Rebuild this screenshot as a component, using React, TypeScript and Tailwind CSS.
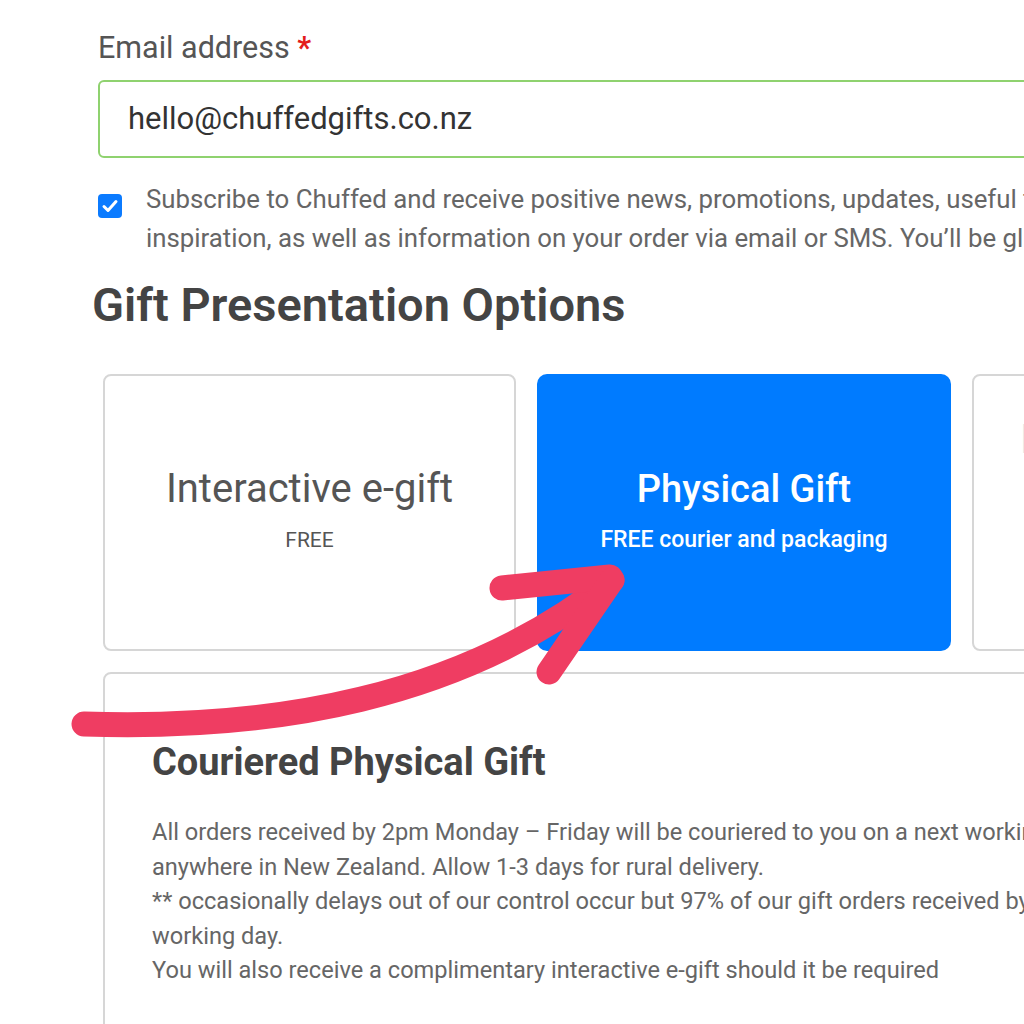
import React from 'react';

const font = { fontFamily: 'Roboto, "Noto Sans", sans-serif' };

function CheckMark() {
  return (
    <svg viewBox="0 0 24 24" className="h-[24px] w-[24px]">
      <rect x="0" y="0" width="24" height="24" rx="4" fill="#0b7bff" />
      <path d="M6 12.5l4 4 8-9" fill="none" stroke="#fff" strokeWidth="3" strokeLinecap="round" strokeLinejoin="round" />
    </svg>
  );
}

function Arrow() {
  return (
    <svg className="pointer-events-none absolute left-0 top-0" width="1024" height="1024" viewBox="0 0 1024 1024">
      <g fill="none" stroke="#ef3d62" strokeWidth="25" strokeLinecap="round" strokeLinejoin="round">
        <path d="M84 724 C 270 730, 460 700, 612 580" />
        <path d="M502 588 L 610 577" />
        <path d="M612 580 L 549 672" />
      </g>
    </svg>
  );
}

export default function App() {
  return (
    <div className="relative h-[1024px] w-[1024px] overflow-hidden bg-white" style={font}>
      <div className="w-[1400px] pl-[98px] pt-[28px]">
        <label className="block text-[30.5px] leading-[40px] text-[#555]">
          Email address <span className="font-bold text-[#e31b1b]">*</span>
        </label>
        <div className="mt-[12px] flex h-[78px] w-[1200px] items-center rounded-[6px] border-2 border-[#8fd26f] pl-[28px] text-[31px] text-[#333]">
          hello@chuffedgifts.co.nz
        </div>
        <div className="mt-[22px] flex gap-[24px]">
          <div className="pt-[14px]">
            <CheckMark />
          </div>
          <div className="whitespace-nowrap text-[25.8px] leading-[39px] text-[#666]">
            <div>Subscribe to Chuffed and receive positive news, promotions, updates, useful tips and gift</div>
            <div>inspiration, as well as information on your order via email or SMS. You’ll be glad you did.</div>
          </div>
        </div>
        <h2 className="ml-[-6px] mt-[19px] text-[47px] font-semibold leading-[56px] text-[#444]">Gift Presentation Options</h2>
        <div className="ml-[5px] mt-[41px] flex gap-[21px]">
          <div className="flex h-[277px] w-[413px] flex-col items-center justify-center rounded-[8px] border-2 border-[#d6d6d6] pb-[5px]">
            <div className="text-[40px] leading-[48px] text-[#555]">Interactive e-gift</div>
            <div className="mt-[12px] text-[21px] leading-[30px] text-[#555]">FREE</div>
          </div>
          <div className="flex h-[277px] w-[414px] flex-col items-center justify-center rounded-[10px] bg-[#007bff] pb-[5px] text-white">
            <div className="text-[38px] font-medium leading-[48px]">Physical Gift</div>
            <div className="mt-[12px] text-[23px] font-medium leading-[30px]">FREE courier and packaging</div>
          </div>
          <div className="h-[277px] w-[413px] rounded-[8px] border-2 border-[#d6d6d6] pl-[46px] pt-[40px]">
            <div className="text-[40px] leading-[48px] text-[#e4e4e4]">Ready</div>
          </div>
        </div>
        <div className="ml-[5px] mt-[21px] h-[400px] w-[1200px] rounded-[8px] border-2 border-[#d6d6d6] pl-[47px] pt-[66px]">
          <h3 className="text-[38px] font-bold leading-[44px] text-[#444]">Couriered Physical Gift</h3>
          <div className="mt-[31px] whitespace-nowrap text-[23.6px] leading-[34.6px] text-[#666]">
            <div>All orders received by 2pm Monday – Friday will be couriered to you on a next working day for delivery</div>
            <div>anywhere in New Zealand. Allow 1-3 days for rural delivery.</div>
            <div>** occasionally delays out of our control occur but 97% of our gift orders received by 2pm arrive the next</div>
            <div>working day.</div>
            <div>You will also receive a complimentary interactive e-gift should it be required</div>
          </div>
        </div>
      </div>
      <Arrow />
    </div>
  );
}
